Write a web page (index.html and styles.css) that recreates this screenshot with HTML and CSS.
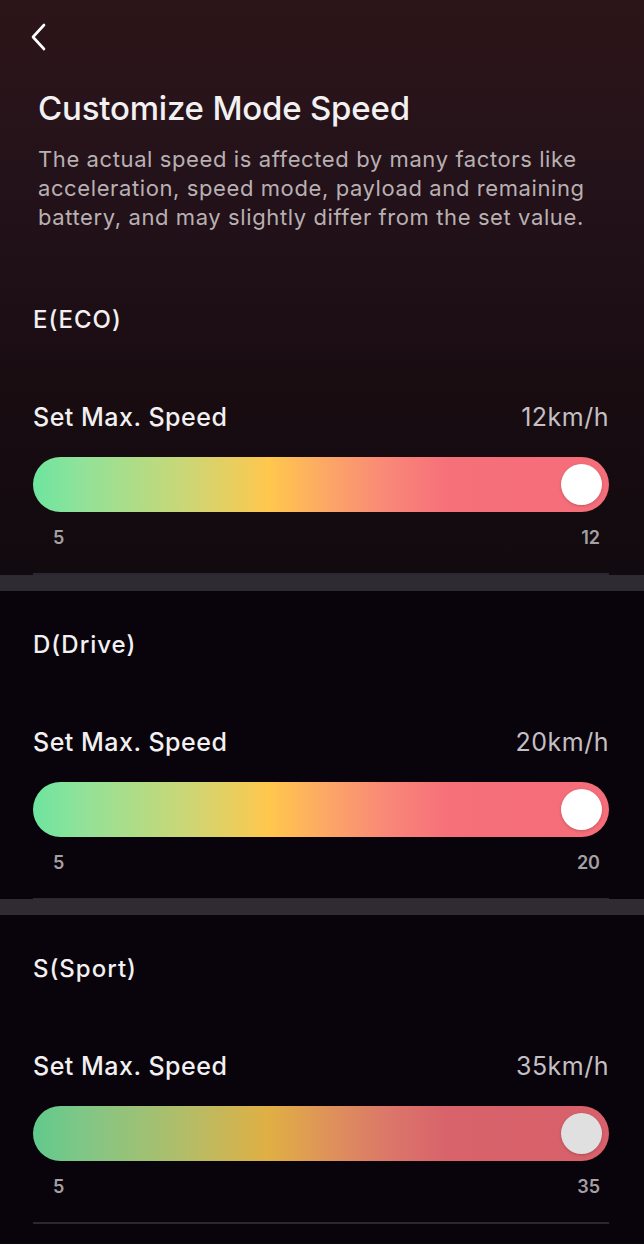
FILE: index.html
```html
<!DOCTYPE html>
<html lang="en">
  <head>
    <meta charset="UTF-8" />
    <meta name="viewport" content="width=device-width, initial-scale=1.0" />
    <title>Customize Mode Speed</title>
    <link rel="stylesheet" href="styles.css">
  </head>
  <body>
    <div class="top">
      <header class="header">
        <button class="back" aria-label="Back">
          <svg width="20" height="30" viewBox="0 0 20 30">
            <polyline points="14,3 3,15 14,27" fill="none" stroke="#fff" stroke-width="2.6" stroke-linecap="round" stroke-linejoin="round" />
          </svg>
        </button>
        <h1>Customize Mode Speed</h1>
        <p class="desc">The actual speed is affected by many factors like acceleration, speed mode, payload and remaining battery, and may slightly differ from the set value.</p>
      </header>

      <!-- Eco mode -->
      <section class="mode">
        <div class="mode-inner">
          <h2>E(ECO)</h2>
          <div class="row">
            <span>Set Max. Speed</span>
            <span class="value">12km/h</span>
          </div>
          <div class="slider"><span class="thumb"></span></div>
          <div class="range">
            <span>5</span>
            <span>12</span>
          </div>
        </div>
      </section>
    </div>

    <div class="band"></div>

    <!-- Drive mode -->
    <section class="mode">
      <div class="mode-inner">
        <h2>D(Drive)</h2>
        <div class="row">
          <span>Set Max. Speed</span>
          <span class="value">20km/h</span>
        </div>
        <div class="slider"><span class="thumb"></span></div>
        <div class="range">
          <span>5</span>
          <span>20</span>
        </div>
      </div>
    </section>

    <div class="band"></div>

    <!-- Sport mode -->
    <section class="mode">
      <div class="mode-inner">
        <h2>S(Sport)</h2>
        <div class="row">
          <span>Set Max. Speed</span>
          <span class="value">35km/h</span>
        </div>
        <div class="slider dim"><span class="thumb"></span></div>
        <div class="range">
          <span>5</span>
          <span>35</span>
        </div>
      </div>
    </section>
  </body>
</html>
```

FILE: styles.css
```css
/* General styles */
body {
  font-family: Inter, "Liberation Sans", sans-serif;
  background-color: #09040b;
  color: #f2f0f1;
  margin: 0;
  padding: 0;
  height: 1244px;
  overflow: hidden;
}

.top {
  background: linear-gradient(180deg, #2c1518 0%, #24121a 30%, #180c11 70%, #110a0e 100%);
}

/* Header */
.header {
  padding: 0 44px 34px 38px;
}

.back {
  display: flex;
  align-items: center;
  height: 74px;
  margin-left: -8px;
  padding: 0;
  background: none;
  border: none;
  cursor: pointer;
}

h1 {
  margin: 14px 0 0;
  font-size: 33px;
  line-height: 40px;
  font-weight: 500;
  letter-spacing: -0.2px;
}

.desc {
  margin: 17px 0 0;
  font-size: 22px;
  line-height: 29px;
  color: #b9b0b2;
  letter-spacing: 0.6px;
}

/* Mode sections */
.mode {
  padding: 39px 35px 0 33px;
}

.mode-inner {
  padding-bottom: 25px;
  border-bottom: 1px solid #2c2632;
}

h2 {
  margin: 0;
  font-size: 24px;
  line-height: 30px;
  font-weight: 500;
  letter-spacing: 1px;
}

.row {
  display: flex;
  justify-content: space-between;
  margin-top: 67px;
  font-size: 25px;
  line-height: 30px;
  font-weight: 500;
  letter-spacing: 0.5px;
}

.row .value {
  color: #c4bfc2;
  font-weight: 400;
}

/* Slider */
.slider {
  display: flex;
  justify-content: flex-end;
  align-items: center;
  height: 55px;
  margin-top: 25px;
  padding-right: 7px;
  border-radius: 28px;
  background: linear-gradient(90deg, #6de59f 0%, #8fe29a 8%, #c9d777 26%, #ffc74d 41%, #fca468 52%, #f98678 62%, #f6707a 72%, #f46d79 100%);
  box-sizing: border-box;
}

.slider.dim {
  filter: brightness(0.88);
}

.thumb {
  width: 41px;
  height: 41px;
  border-radius: 50%;
  background-color: #fff;
  box-shadow: 0 1px 3px rgba(0, 0, 0, 0.2);
}

.range {
  display: flex;
  justify-content: space-between;
  margin-top: 16px;
  padding: 0 9px 0 20px;
  font-size: 18px;
  line-height: 20px;
  font-weight: 600;
  color: #a4a0a3;
}

.band {
  height: 16px;
  background-color: #2e2b33;
}

.mode:last-child .mode-inner {
  border-bottom-width: 2px;
}
```
